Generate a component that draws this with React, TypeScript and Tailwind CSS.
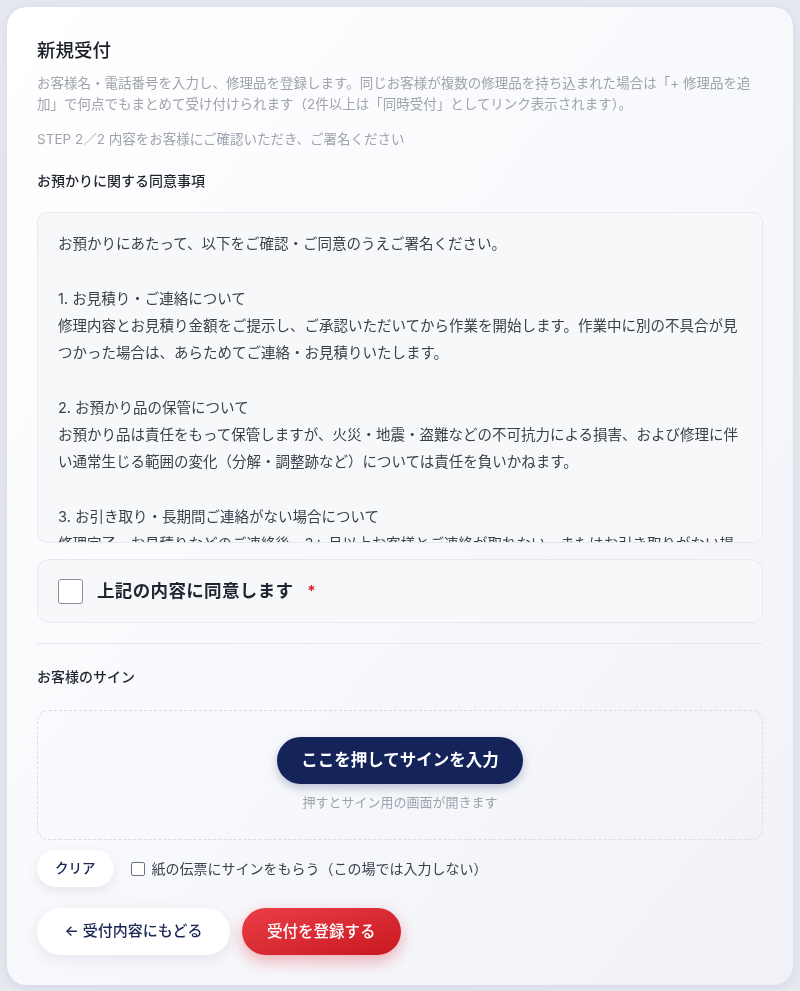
import { useState } from 'react';

const AGREEMENT = `お預かりにあたって、以下をご確認・ご同意のうえご署名ください。

1. お見積り・ご連絡について
修理内容とお見積り金額をご提示し、ご承認いただいてから作業を開始します。作業中に別の不具合が見つかった場合は、あらためてご連絡・お見積りいたします。

2. お預かり品の保管について
お預かり品は責任をもって保管しますが、火災・地震・盗難などの不可抗力による損害、および修理に伴い通常生じる範囲の変化（分解・調整跡など）については責任を負いかねます。

3. お引き取り・長期間ご連絡がない場合について
修理完了・お見積りなどのご連絡後、3ヶ月以上お客様とご連絡が取れない、またはお引き取りがない場合は、お預かり品を処分させていただくことがあります。

4. 個人情報の取り扱いについて
ご記入いただいた個人情報は、修理のご連絡・お引き渡しの目的以外には使用いたしません。`;

export default function App() {
  const [agreed, setAgreed] = useState(false);
  const [paperSign, setPaperSign] = useState(false);

  return (
    <div
      className="min-h-screen bg-[#e6e8f0] p-[7px] pb-[6px]"
      style={{ fontFamily: 'Inter, "Noto Sans CJK JP", "Noto Sans", sans-serif' }}
    >
      <div className="rounded-[20px] bg-gradient-to-br from-white via-[#f8f9fc] to-[#f0f2f8] px-[30px] pt-[30px] pb-[30px] shadow-[0_2px_10px_rgba(60,70,110,0.10)]">
        {/* ヘッダー */}
        <h1 className="text-[18.5px] leading-[26px] font-medium text-[#1a1e28]">新規受付</h1>
        <p className="mt-[10px] max-w-[720px] text-[13.5px] leading-[21px] text-[#9ea3ad]">
          お客様名・電話番号を入力し、修理品を登録します。同じお客様が複数の修理品を持ち込まれた場合は「+ 修理品を追加」で何点でもまとめて受け付けられます（2件以上は「同時受付」としてリンク表示されます）。
        </p>
        <p className="mt-[14px] text-[13.5px] leading-[21px] text-[#9ea3ad]">
          STEP 2／2 内容をお客様にご確認いただき、ご署名ください
        </p>

        {/* 同意事項 */}
        <h2 className="mt-[20px] text-[14px] leading-[21px] font-medium text-[#1f2430]">お預かりに関する同意事項</h2>
        <div className="mt-[21px] h-[331px] overflow-y-auto rounded-[10px] border border-[#e6e8ed] bg-[#f7f8fa] px-[20px] pt-[17px] [scrollbar-width:none]">
          <p className="whitespace-pre-wrap text-[14.5px] leading-[27.3px] text-[#3a3f4a]">{AGREEMENT}</p>
        </div>

        <label className="mt-[16px] flex h-[64px] cursor-pointer items-center rounded-[12px] border border-[#e6e8ed] bg-[#f7f8fa] pl-[20px]">
          <input
            type="checkbox"
            checked={agreed}
            onChange={(e) => setAgreed(e.target.checked)}
            className="h-[25px] w-[25px] appearance-none rounded-[3px] border-[1.5px] border-[#8a8f99] bg-white checked:bg-[#14235a]"
          />
          <span className="ml-[14px] text-[17.5px] font-bold tracking-[0.02em] text-[#1f2430]">上記の内容に同意します</span>
          <span className="ml-[14px] text-[15px] font-bold text-[#e11d2a]">*</span>
        </label>

        <div className="mt-[20px] h-px bg-[#e6e8ee]" />

        {/* サイン */}
        <h2 className="mt-[22px] text-[14px] leading-[21px] font-medium text-[#1f2430]">お客様のサイン</h2>
        <div className="mt-[23px] flex h-[130px] flex-col items-center rounded-[12px] border-[1.5px] border-dashed border-[#d9dce4] pt-[26px]">
          <button className="h-[47px] rounded-full bg-[#14235a] px-[24px] text-[16.5px] font-bold text-white shadow-[0_4px_10px_rgba(20,35,90,0.25)]">
            ここを押してサインを入力
          </button>
          <p className="mt-[9px] text-[13px] leading-[18px] text-[#9ea3ad]">押すとサイン用の画面が開きます</p>
        </div>

        <div className="mt-[10px] flex items-center">
          <button className="h-[37px] rounded-full bg-white px-[18px] text-[13.5px] font-medium text-[#1a2656] shadow-[0_4px_12px_rgba(60,70,110,0.10)]">
            クリア
          </button>
          <label className="ml-[17px] flex cursor-pointer items-center gap-[7px] text-[14px] text-[#3a3f4a]">
            <input
              type="checkbox"
              checked={paperSign}
              onChange={(e) => setPaperSign(e.target.checked)}
              className="h-[14px] w-[14px] appearance-none rounded-[2px] border border-[#6b7080] bg-white checked:bg-[#14235a]"
            />
            紙の伝票にサインをもらう（この場では入力しない）
          </label>
        </div>

        {/* アクション */}
        <div className="mt-[21px] flex items-center gap-[12px]">
          <button className="h-[47px] rounded-full bg-white px-[27.5px] text-[15px] font-medium text-[#1a2656] shadow-[0_4px_14px_rgba(60,70,110,0.10)]">
            ← 受付内容にもどる
          </button>
          <button className="h-[47px] rounded-full bg-gradient-to-br from-[#ec3d47] to-[#c8161f] px-[25px] text-[15.5px] font-medium text-white shadow-[0_6px_16px_rgba(220,38,50,0.35)]">
            受付を登録する
          </button>
        </div>
      </div>
    </div>
  );
}
